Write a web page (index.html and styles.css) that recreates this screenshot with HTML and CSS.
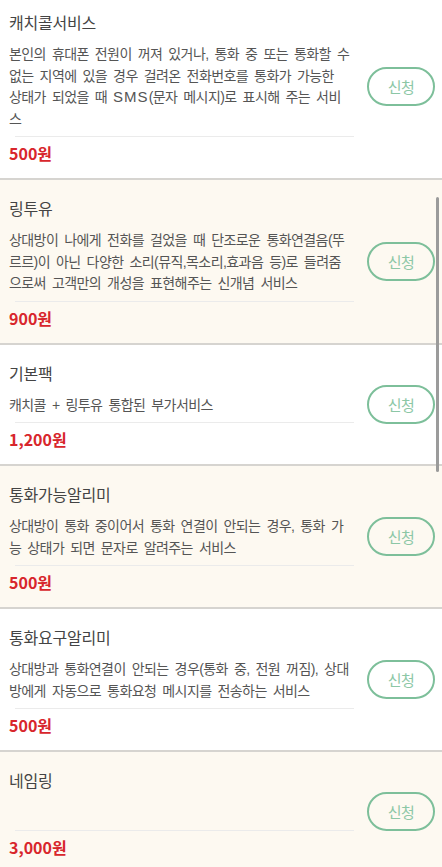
FILE: index.html
```html
<!DOCTYPE html>
<html lang="ko">
<head>
<meta charset="utf-8">
<title>부가서비스</title>
<link rel="stylesheet" href="styles.css">
</head>
<body>
<ul class="list">
  <li class="item">
    <div class="info">
      <h3 class="title">캐치콜서비스</h3>
      <p class="desc">본인의 휴대폰 전원이 꺼져 있거나, 통화 중 또는 통화할 수 없는 지역에 있을 경우 걸려온 전화번호를 통화가 가능한 상태가 되었을 때 <abbr class="abbr">SMS</abbr>(문자 메시지)로 표시해 주는 서비스</p>
      <p class="price">500원</p>
    </div>
    <div class="action"><button class="apply">신청</button></div>
  </li>
  <li class="item alt">
    <div class="info">
      <h3 class="title">링투유</h3>
      <p class="desc">상대방이 나에게 전화를 걸었을 때 단조로운 통화연결음(뚜르르)이 아닌 다양한 소리(뮤직,목소리,효과음 등)로 들려줌으로써 고객만의 개성을 표현해주는 신개념 서비스</p>
      <p class="price">900원</p>
    </div>
    <div class="action"><button class="apply">신청</button></div>
  </li>
  <li class="item">
    <div class="info">
      <h3 class="title">기본팩</h3>
      <p class="desc">캐치콜 + 링투유 통합된 부가서비스</p>
      <p class="price">1,200원</p>
    </div>
    <div class="action"><button class="apply">신청</button></div>
  </li>
  <li class="item alt">
    <div class="info">
      <h3 class="title">통화가능알리미</h3>
      <p class="desc">상대방이 통화 중이어서 통화 연결이 안되는 경우, 통화 가능 상태가 되면 문자로 알려주는 서비스</p>
      <p class="price">500원</p>
    </div>
    <div class="action"><button class="apply">신청</button></div>
  </li>
  <li class="item">
    <div class="info">
      <h3 class="title">통화요구알리미</h3>
      <p class="desc">상대방과 통화연결이 안되는 경우(통화 중, 전원 꺼짐), 상대방에게 자동으로 통화요청 메시지를 전송하는 서비스</p>
      <p class="price">500원</p>
    </div>
    <div class="action"><button class="apply">신청</button></div>
  </li>
  <li class="item alt">
    <div class="info">
      <h3 class="title">네임링</h3>
      <p class="desc empty"></p>
      <p class="price">3,000원</p>
    </div>
    <div class="action"><button class="apply">신청</button></div>
  </li>
</ul>
<div class="scrollbar"></div>
</body>
</html>
```
FILE: styles.css
```css
html, body {
  margin: 0;
  padding: 0;
  background: #ffffff;
  font-family: "Noto Sans CJK KR", "Noto Sans", sans-serif;
  overflow: hidden;
}

.list {
  list-style: none;
  margin: -6px 0 0 0;
  padding: 0;
}

.item {
  display: flex;
  align-items: center;
  background: #ffffff;
  border-bottom: 2px solid #d6d4d0;
}

.item.alt {
  background: #fdf9f1;
}

.info {
  width: 342.2px;
  padding: 16px 3.3px 13px 9px;
  box-sizing: content-box;
}

.title {
  margin: 0;
  font-size: 16px;
  line-height: 24px;
  font-weight: 400;
  letter-spacing: -0.2px;
  color: #444444;
}

.desc {
  margin: 10px 0 0 0;
  padding-bottom: 6px;
  font-family: "Liberation Sans", "Noto Sans CJK KR", sans-serif;
  font-size: 14px;
  line-height: 21.5px;
  letter-spacing: -0.58px;
  word-spacing: 2.69px;
  color: #555555;
  word-break: break-all;
  position: relative;
}

.abbr {
  font-size: 15px;
  line-height: 1;
  letter-spacing: 1px;
  text-decoration: none;
}

.desc::after {
  content: "";
  display: block;
  position: absolute;
  left: 6px;
  right: -3.3px;
  bottom: -1px;
  height: 1px;
  background: #ebebeb;
}

.desc.empty {
  min-height: 21.5px;
}

.price {
  margin: 5px 0 0 0;
  font-size: 16px;
  line-height: 24px;
  font-weight: 700;
  letter-spacing: 0;
  color: #d8262c;
}

.action {
  flex: 1;
  display: flex;
  justify-content: flex-end;
  padding-right: 7px;
}

.apply {
  width: 68px;
  height: 39px;
  border: 2px solid #7dbf9a;
  border-radius: 20px;
  background: transparent;
  font-family: "Noto Sans CJK KR", "Noto Sans", sans-serif;
  font-size: 15px;
  letter-spacing: -0.5px;
  color: #8cc7a6;
  padding: 0;
}

.scrollbar {
  position: fixed;
  top: 197px;
  right: 3px;
  width: 3px;
  height: 275px;
  background: #9b9b9b;
  border-radius: 2px;
}
```
